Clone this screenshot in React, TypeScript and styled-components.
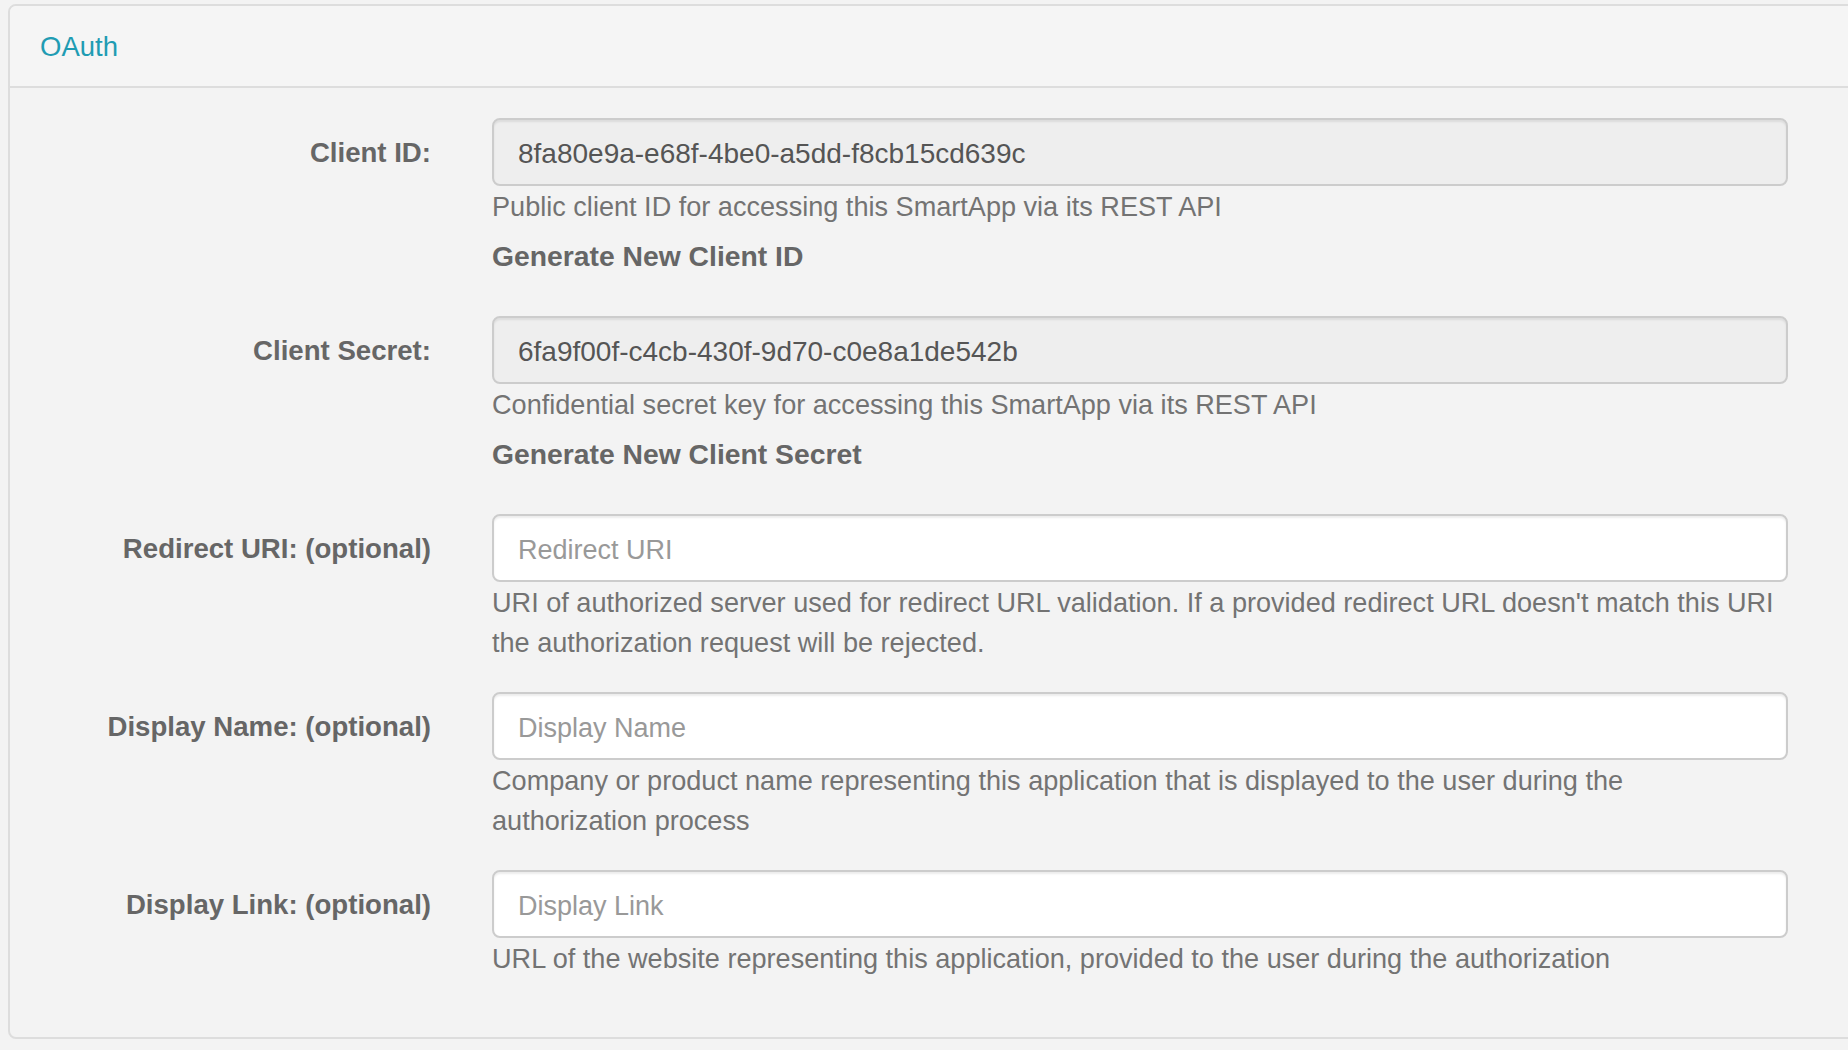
import React from "react";
import styled, { createGlobalStyle } from "styled-components";

const Global = createGlobalStyle`
  html, body {
    margin: 0;
    padding: 0;
    background: #f3f3f3;
    overflow: hidden;
  }
  body {
    font-family: "Liberation Sans", Arial, sans-serif;
  }
  * { box-sizing: border-box; }
`;

const Page = styled.div`
  padding: 4px 0 0 8px;
  width: 1848px;
  height: 1050px;
`;

const Panel = styled.section`
  width: 1860px;
  border: 2px solid #dddddd;
  border-radius: 8px;
  background: #f3f3f3;
`;

const PanelHeading = styled.header`
  background: #f5f5f5;
  border-bottom: 2px solid #dddddd;
  border-radius: 6px 6px 0 0;
  padding: 21px 30px 19px;
  height: 82px;
`;

const PanelTitle = styled.h3`
  margin: 0;
  font-size: 27.5px;
  line-height: 40px;
  font-weight: 400;
  color: #1f9cb3;
`;

const PanelBody = styled.div`
  padding: 30px 30px 58px 30px;
`;

const Row = styled.div<{ $gap: number }>`
  display: grid;
  grid-template-columns: 391px 1296px;
  column-gap: 61px;
  margin-bottom: ${(p) => p.$gap}px;
  &:last-child {
    margin-bottom: 0;
  }
`;

const Label = styled.label`
  text-align: right;
  padding-top: 15px;
  font-size: 27.6px;
  line-height: 40px;
  font-weight: 700;
  color: #666666;
  white-space: nowrap;
`;

const Control = styled.div`
  display: flex;
  flex-direction: column;
`;

const Input = styled.input<{ $readOnlyLook?: boolean }>`
  height: 68px;
  width: 100%;
  padding: 4px 24px 0;
  border: 2px solid #cccccc;
  border-radius: 8px;
  background: ${(p) => (p.$readOnlyLook ? "#eeeeee" : "#ffffff")};
  box-shadow: inset 0 2px 2px rgba(0, 0, 0, 0.075);
  font-family: "Liberation Sans", Arial, sans-serif;
  font-size: 28px;
  color: #555555;
  outline: none;
  &::placeholder {
    color: #999999;
    font-size: 27px;
  }
`;

const Help = styled.p`
  margin: 1px 0 0 0;
  padding-right: 8px;
  font-size: 27.1px;
  line-height: 40px;
  color: #737373;
`;

const GenerateLink = styled.a`
  display: block;
  margin-top: 9px;
  font-size: 28.3px;
  line-height: 40px;
  font-weight: 700;
  color: #666666;
  text-decoration: none;
  cursor: pointer;
`;

type Field = {
  label: string;
  value?: string;
  placeholder?: string;
  help: string;
  action?: string;
  gap: number;
};

const fields: Field[] = [
  {
    label: "Client ID:",
    value: "8fa80e9a-e68f-4be0-a5dd-f8cb15cd639c",
    help: "Public client ID for accessing this SmartApp via its REST API",
    action: "Generate New Client ID",
    gap: 40,
  },
  {
    label: "Client Secret:",
    value: "6fa9f00f-c4cb-430f-9d70-c0e8a1de542b",
    help: "Confidential secret key for accessing this SmartApp via its REST API",
    action: "Generate New Client Secret",
    gap: 40,
  },
  {
    label: "Redirect URI: (optional)",
    placeholder: "Redirect URI",
    help:
      "URI of authorized server used for redirect URL validation. If a provided redirect URL doesn't match this URI the authorization request will be rejected.",
    gap: 29,
  },
  {
    label: "Display Name: (optional)",
    placeholder: "Display Name",
    help:
      "Company or product name representing this application that is displayed to the user during the authorization process",
    gap: 29,
  },
  {
    label: "Display Link: (optional)",
    placeholder: "Display Link",
    help:
      "URL of the website representing this application, provided to the user during the authorization",
    gap: 0,
  },
];

export default function App() {
  return (
    <>
      <Global />
      <Page>
        <Panel>
          <PanelHeading>
            <PanelTitle>OAuth</PanelTitle>
          </PanelHeading>
          <PanelBody>
            {fields.map((f) => (
              <Row key={f.label} $gap={f.gap}>
                <Label>{f.label}</Label>
                <Control>
                  {f.value ? (
                    <Input $readOnlyLook readOnly value={f.value} />
                  ) : (
                    <Input placeholder={f.placeholder} />
                  )}
                  <Help>{f.help}</Help>
                  {f.action && <GenerateLink>{f.action}</GenerateLink>}
                </Control>
              </Row>
            ))}
          </PanelBody>
        </Panel>
      </Page>
    </>
  );
}
